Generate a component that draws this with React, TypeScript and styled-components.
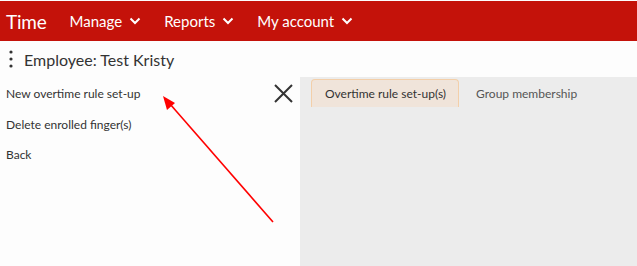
import React from 'react';
import styled, {createGlobalStyle} from 'styled-components';

const GlobalStyle = createGlobalStyle`
  html, body {
    margin: 0;
    padding: 0;
    background: #fdfdfd;
    font-family: Lato, "Open Sans", sans-serif;
  }
`;

const Page = styled.div`
  width: 637px;
  height: 266px;
  display: flex;
  flex-direction: column;
  position: relative;
  overflow: hidden;
  padding-top: 1px;
  box-sizing: border-box;
`;

const TopBar = styled.div`
  height: 40px;
  background-color: #c4120a;
  display: flex;
  align-items: center;
  padding-left: 6px;
  color: #ffffff;
`;

const Brand = styled.div`
  font-size: 19px;
  margin-right: 23px;
  letter-spacing: -0.2px;
`;

const NavItem = styled.div`
  display: flex;
  align-items: center;
  font-size: 15px;
  margin-right: 23px;
  gap: 7px;
`;

const TitleRow = styled.div`
  height: 36px;
  display: flex;
  align-items: center;
  padding-left: 8px;
  gap: 10px;
  color: #333333;
  font-size: 16px;
`;

const Body = styled.div`
  flex: 1;
  display: flex;
`;

const Menu = styled.div`
  width: 300px;
  position: relative;
  padding-top: 6px;
  box-sizing: border-box;
`;

const MenuItem = styled.div`
  font-size: 12px;
  color: #333333;
  height: 30.5px;
  line-height: 22px;
  padding-left: 6px;
`;

const CloseButton = styled.div`
  position: absolute;
  top: 6px;
  left: 273px;
  width: 21px;
  height: 21px;
`;

const Content = styled.div`
  flex: 1;
  background-color: #ececec;
  padding: 2px 0 0 11px;
`;

const Tabs = styled.div`
  display: flex;
`;

const Tab = styled.div<{active?: boolean}>`
  height: 28px;
  box-sizing: border-box;
  padding: 0 12px 0 13px;
  display: flex;
  align-items: center;
  font-size: 12px;
  color: ${p => (p.active ? '#333333' : '#555555')};
  background-color: ${p => (p.active ? '#f0e4da' : 'transparent')};
  border: 1px solid ${p => (p.active ? '#f3cfa9' : 'transparent')};
  border-bottom: none;
  border-radius: 4px 4px 0 0;
  margin-right: 3px;
`;

const Arrow = styled.svg`
  position: absolute;
  left: 0;
  top: 0;
  pointer-events: none;
`;

const Chevron = () => (
  <svg width="12" height="8" viewBox="0 0 12 8">
    <path d="M1.5 1.5 L6 6 L10.5 1.5" stroke="#fff" strokeWidth="2" fill="none" />
  </svg>
);

const Kebab = () => (
  <svg width="6" height="20" viewBox="0 0 6 20">
    <circle cx="3" cy="3" r="1.6" fill="#333" />
    <circle cx="3" cy="10" r="1.6" fill="#333" />
    <circle cx="3" cy="17" r="1.6" fill="#333" />
  </svg>
);

export default function App() {
  return (
    <>
      <GlobalStyle />
      <Page>
        <TopBar>
          <Brand>Time</Brand>
          <NavItem>
            Manage <Chevron />
          </NavItem>
          <NavItem>
            Reports <Chevron />
          </NavItem>
          <NavItem>
            My account <Chevron />
          </NavItem>
        </TopBar>
        <TitleRow>
          <Kebab />
          Employee: Test Kristy
        </TitleRow>
        <Body>
          <Menu>
            <MenuItem>New overtime rule set-up</MenuItem>
            <MenuItem>Delete enrolled finger(s)</MenuItem>
            <MenuItem>Back</MenuItem>
            <CloseButton>
              <svg width="21" height="21" viewBox="0 0 21 21">
                <path d="M2 2 L19 19 M19 2 L2 19" stroke="#333" strokeWidth="2" />
              </svg>
            </CloseButton>
          </Menu>
          <Content>
            <Tabs>
              <Tab active>Overtime rule set-up(s)</Tab>
              <Tab>Group membership</Tab>
            </Tabs>
          </Content>
        </Body>
        <Arrow width="637" height="266" viewBox="0 0 637 266">
          <line x1="273" y1="222" x2="170" y2="104" stroke="#ff0000" strokeWidth="1.6" />
          <polygon points="163,96 175,103 167,110" fill="#ff0000" />
        </Arrow>
      </Page>
    </>
  );
}
